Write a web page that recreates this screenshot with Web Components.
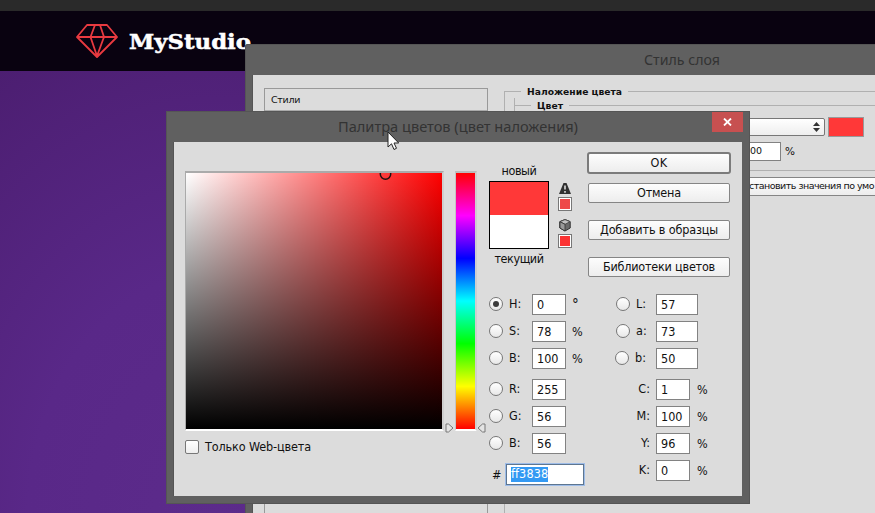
<!DOCTYPE html>
<html lang="ru">
<head>
<meta charset="utf-8">
<title>MyStudio</title>
<style>
html,body{margin:0;width:875px;height:513px;overflow:hidden}
</style>
</head>
<body>
<studio-desktop></studio-desktop>
<script>
const define = (name, css, html, init) => customElements.define(name, class extends HTMLElement {
  constructor() {
    super();
    this.attachShadow({mode: 'open'});
  }
  connectedCallback() {
    const src = typeof html === 'function' ? html(this) : html;
    this.shadowRoot.innerHTML = `<style>*{box-sizing:border-box}${css}</style>${src}`;
    if (init) init(this);
  }
});

/* Text line fitted to a given width: by letter spacing, or by stretching when "scale" is set. */
customElements.define('fit-text', class extends HTMLElement {
  connectedCallback() {
    if (!this.shadowRoot) this.attachShadow({mode: 'open'});
    this.shadowRoot.innerHTML = '<style>:host{display:inline-block;white-space:nowrap;flex:none}span{display:inline-block;white-space:pre;transform-origin:0 50%}</style><span></span>';
    const s = this.shadowRoot.querySelector('span');
    const t = this.getAttribute('t');
    s.textContent = t;
    const w = +this.getAttribute('w');
    if (w) {
      this.style.width = w + 'px';
      const n = s.getBoundingClientRect().width;
      if (this.hasAttribute('scale')) s.style.transform = `scaleX(${w / n})`;
      else s.style.letterSpacing = ((w - n) / t.length) + 'px';
    }
  }
});

define('window-frame', `
:host{display:flex;flex-direction:column;background:#606060;box-shadow:inset 0 0 0 1px #555;padding:0 8px 8px}
header{flex:none;height:var(--bar);display:flex;justify-content:center;align-items:center;position:relative;color:#333;font:15px "Noto Sans","Open Sans",sans-serif;padding-bottom:2px}
main{flex:1;background:#dcdcdc;min-height:0;display:flex;align-items:flex-start;box-shadow:-1px 0 #555}
`, '<header><slot name="title"></slot><slot name="close"></slot></header><main><slot></slot></main>');

define('close-button', `
:host{position:absolute;right:-1px;top:1px;width:31px;height:20px;background:#c75050;display:flex;align-items:center;justify-content:center}
`, '<svg width="9" height="8" viewBox="0 0 9 8"><path d="M1 .5 8 7.5M8 .5 1 7.5" stroke="#fff" stroke-width="1.8"/></svg>');

define('push-button', `
:host{display:flex;height:20px;align-items:center;justify-content:center;background:linear-gradient(#fdfdfd,#ededed);border:1px solid #858585;border-radius:2px;color:#111;padding-bottom:2px;box-sizing:border-box}
:host([primary]){height:22px;border:2px solid #7b7b7b;border-radius:3px}
`, '<slot></slot>');

define('value-box', `
:host{display:flex;height:21px;width:34px;align-items:center;padding:0 0 1px 4px;border:1px solid #828282;background:#fff;color:#111;box-sizing:border-box}
:host([wide]){width:42px}
`, '<slot></slot>');

define('radio-dot', `
:host{display:flex;width:14px;height:14px;border-radius:50%;border:1px solid #777;background:linear-gradient(#fff,#e8e8e8);align-items:center;justify-content:center;flex:none;box-sizing:border-box;margin-bottom:2px}
i{width:6px;height:6px;border-radius:50%;background:#3c3c3c}
`, el => el.hasAttribute('on') ? '<i></i>' : '');

define('channel-row', `
:host{display:grid;grid-template-columns:14px 29px auto 1fr;height:21px;align-items:center;width:112px}
:host([right]){grid-template-columns:14px 26px auto 1fr;width:110px}
label{padding:0 0 2px 6px;white-space:nowrap}
:host([ink]) label{grid-column:1/3;padding:0 6px 2px 0;text-align:right}
em{font-style:normal;padding-left:6px}
em.deg{font-size:15px;line-height:15px;padding-top:2px}
:host([right]) em{padding-left:7px}
`, el => {
  const a = n => el.getAttribute(n), h = n => el.hasAttribute(n);
  return `${h('ink') ? '' : `<radio-dot ${h('on') ? 'on' : ''}></radio-dot>`}<label>${a('k')}:</label><value-box ${h('wide') ? 'wide' : ''}>${a('v')}</value-box><em${a('u') === '°' ? ' class="deg"' : ''}>${a('u') || ''}</em>`;
});

define('color-field', `
:host{display:block;position:relative;width:259px;height:260px;border:solid;border-width:2px 2px 2px 1px;border-color:#aaa #cfcfcf #fff #aaa;box-sizing:border-box}
div{width:256px;height:256px;overflow:hidden;background:linear-gradient(transparent,#000),linear-gradient(90deg,#fff,#f00)}
svg{position:absolute;left:193px;top:0}
`, '<div></div><svg width="14" height="7" viewBox="0 0 14 7"><circle cx="6.5" cy="1" r="5.2" fill="none" stroke="#201010" stroke-width="1.5"/></svg>');

define('hue-slider', `
:host{display:block;position:relative;width:22px;height:260px;border:solid;border-width:2px 2px 2px 1px;border-color:#bbb #cfcfcf #fff #c4c4c4;box-sizing:border-box}
div{height:256px;background:linear-gradient(#f00,#f0f 16.67%,#00f 33.33%,#0ff 50%,#0f0 66.67%,#ff0 83.33%,#f00)}
svg{position:absolute;top:250px}
.l{left:-11px}.r{left:21px}
path{fill:#e4e4e4;stroke:#777}
`, '<div></div><svg class="l" width="9" height="10"><path d="M1 1H3.5L8 5 3.5 9H1Z"/></svg><svg class="r" width="9" height="10"><path d="M8 1H5.5L1 5 5.5 9H8Z"/></svg>');

define('color-compare', `
:host{display:flex;flex-direction:column;align-items:center;width:60px}
div{width:60px;height:68px;border:1px solid #000;background:linear-gradient(#ff3838 33px,#fff 33px)}
fit-text{height:20px;line-height:20px}
`, '<fit-text t="новый" w="35"></fit-text><div></div><fit-text t="текущий" w="49"></fit-text>');

define('gamut-hints', `
:host{display:flex;flex-direction:column;width:14px;align-items:center}
svg{flex:none}
b{display:block;width:14px;height:14px;flex:none;border:1px solid #777;box-shadow:inset 0 0 0 1px #fff;background:#ee4848}
b.s{background:#fb3333}
`, `<svg width="14" height="14" viewBox="0 0 14 14"><path d="M5.5 1H8.5L13 12H1Z" fill="#303030"/><path d="M7 3.5V7.6M7 9V10.8" stroke="#ddd" stroke-width="1.6"/></svg><b style="margin-top:1px"></b>
<svg style="margin-top:7px" width="14" height="15" viewBox="0 0 14 15"><path d="M7 1.5 12.2 3.6V10L7 13 1.8 10V3.6Z" fill="#6a6a6a" stroke="#303030"/><path d="M7 1.6 12 3.7 7 6.3 2 3.7Z" fill="#c0c0c0" stroke="#444" stroke-width=".8"/><path d="M7 6.3V13L2 10V3.8Z" fill="#999" stroke="#303030" stroke-width=".8"/></svg><b class="s" style="margin-top:1px"></b>`);

define('hex-input', `
:host{display:flex;align-items:center;height:23px}
span{width:15px;padding-left:2px;flex:none}
div{width:80px;height:23px;border:1px solid #9dbce8;flex:none}
p{margin:0;height:21px;background:#fff;border:1px solid #5e7690;display:flex;align-items:center;padding-left:4px}
fit-text{background:#3399f3;color:#fff;height:15px;line-height:14px}
`, '<span>#</span><div><p><fit-text t="ff3838" w="37"></fit-text></p></div>');

define('color-picker', `
:host{display:flex;align-items:flex-start;font:12.5px "DejaVu Sans Condensed","DejaVu Sans",sans-serif;font-stretch:condensed;color:#111}
.left{width:304px;padding:29px 0 0 11px}
.maps{display:flex;gap:11px}
.web{display:flex;align-items:center;gap:6px;height:16px;margin-top:8px}
.web i{width:14px;height:14px;border:1px solid #777;border-radius:2px;background:linear-gradient(#fff,#eee)}
.web fit-text{margin-bottom:1px}
.right{width:253px;padding:10px 0 0 11px}
.top{display:flex;height:142px}
.buttons{display:flex;flex-direction:column;width:145px;margin-left:15px}
.buttons push-button{margin:0 1px}
.buttons push-button[primary]{margin:0 0 9px}
.chan{display:flex;gap:15px}
.col{display:flex;flex-direction:column;gap:6px}
.gap{margin-top:4px}
.r .b{margin-left:-1px;grid-template-columns:14px 27px auto 1fr}
hex-input{margin:3px 0 0 1px}
`, `
<div class="left">
 <div class="maps"><color-field></color-field><hue-slider></hue-slider></div>
 <div class="web"><i></i><fit-text t="Только Web-цвета" w="106"></fit-text></div>
</div>
<div class="right">
 <div class="top">
  <color-compare style="margin-top:9px"></color-compare>
  <gamut-hints style="margin:30px 0 0 9px"></gamut-hints>
  <div class="buttons">
   <push-button primary><fit-text t="OK" w="17"></fit-text></push-button>
   <push-button><fit-text t="Отмена" w="44"></fit-text></push-button>
   <push-button style="margin-top:17px"><fit-text t="Добавить в образцы" w="118"></fit-text></push-button>
   <push-button style="margin-top:17px"><fit-text t="Библиотеки цветов" w="112"></fit-text></push-button>
  </div>
 </div>
 <div class="chan">
  <div class="col">
   <channel-row on k="H" v="0" u="°"></channel-row>
   <channel-row k="S" v="78" u="%"></channel-row>
   <channel-row k="B" v="100" u="%"></channel-row>
   <channel-row class="gap" k="R" v="255"></channel-row>
   <channel-row k="G" v="56"></channel-row>
   <channel-row k="B" v="56"></channel-row>
   <hex-input></hex-input>
  </div>
  <div class="col r">
   <channel-row right wide k="L" v="57"></channel-row>
   <channel-row right wide k="a" v="73"></channel-row>
   <channel-row right wide class="b" k="b" v="50"></channel-row>
   <channel-row right ink class="gap" k="C" v="1" u="%"></channel-row>
   <channel-row right ink k="M" v="100" u="%"></channel-row>
   <channel-row right ink k="Y" v="96" u="%"></channel-row>
   <channel-row right ink k="K" v="0" u="%"></channel-row>
  </div>
 </div>
</div>`);

define('group-box', `
:host{display:block;border-left:1px solid #b0b0b0;box-sizing:border-box}
header{display:flex;align-items:center;height:14px;margin-top:-7px;gap:6px;font-weight:bold}
header::before{content:"";width:16px;border-top:1px solid #b0b0b0}
header::after{content:"";flex:1;border-top:1px solid #b0b0b0}
`, '<header><slot name="legend"></slot></header><slot></slot>');

define('layer-style', `
:host{display:flex;align-items:flex-start;width:100%;height:100%;font:9.5px "DejaVu Sans",sans-serif;color:#111}
.list{margin:13px 0 0 11px;width:224px;height:440px;border:1px solid #999;flex:none}
.list div{height:22px;border-bottom:1px solid #aaa;display:flex;align-items:center;padding-left:6px}
.outer{margin:16px 0 0 16px;width:420px;height:440px;flex:none}
.inner{margin:7px 0 0 9px;height:73px;border-bottom:1px solid #b0b0b0}
.line{display:flex;align-items:center;justify-content:flex-end;height:20px}
.sel{width:180px;height:18px;border:1px solid #777;border-radius:2px;background:linear-gradient(#fff,#eee);display:flex;align-items:center;justify-content:flex-end;padding-right:4px}
.sw{width:36px;height:20px;border:1px solid #999;background:#ff3838;margin:0 60px 0 3px}
value-box{height:19px;width:60px;padding-left:28px}
.pc{margin:0 125px 0 4px;width:14px;font-size:10.5px}
push-button{height:19px;width:200px;margin:6px 0 0 224px;justify-content:flex-start;padding-left:19px}
`, `
<div class="list"><div><fit-text t="Стили" w="29"></fit-text></div></div>
<group-box class="outer"><fit-text slot="legend" scale t="Наложение цвета" w="95"></fit-text>
 <group-box inner class="inner"><fit-text slot="legend" scale t="Цвет" w="26"></fit-text>
  <div class="line" style="margin-top:5px"><div class="sel"><svg width="7" height="10"><path d="M3.5 0 7 4H0ZM3.5 10 0 6H7Z" fill="#333"/></svg></div><div class="sw"></div></div>
  <div class="line" style="margin-top:4px"><value-box>00</value-box><span class="pc">%</span></div>
 </group-box>
 <push-button><fit-text t="становить значения по умо" w="125"></fit-text></push-button>
</group-box>`);

define('site-page', `
:host{display:flex;flex-direction:column;width:875px;height:513px;background:radial-gradient(ellipse 480px 620px at 220px 520px,#5c2b8b,#592888 40%,#481b6a)}
.top{height:11px;background:#2a2a2a;flex:none}
nav{height:60px;background:#090210;flex:none;display:flex;align-items:center;padding-left:76px;color:#fff}
fit-text{font:bold 21px/30px "DejaVu Serif",serif;margin:2px 0 0 11px;-webkit-text-stroke:.5px #fff}
`, `<div class="top"></div><nav><svg width="42" height="34" viewBox="0 0 42 34" fill="none" stroke="#e93a40" stroke-width="1.8" stroke-linejoin="round"><path d="M11 1H31L41 13 21 33 1 13ZM1 13H41M19 1 14.5 13 21 32M24 1 28 13 21 32"/></svg><fit-text scale t="MyStudio" w="122"></fit-text></nav>`);

define('mouse-pointer', ':host{display:block;width:13px;height:20px}svg{display:block}',
'<svg width="13" height="20" viewBox="0 0 13 20"><path d="M1 1V16L4.5 12.8 7 18.5 9.5 17.3 7 12H11.7Z" fill="#fff" stroke="#222"/></svg>');

define('studio-desktop', `
:host{display:block;position:relative;width:875px;height:513px;overflow:hidden}
.style,.picker,mouse-pointer{position:absolute}
.style{left:245px;top:44px;width:873px;height:560px;--bar:31px;border-top-left-radius:3px}
.picker{left:166px;top:111px;width:584px;height:393px;--bar:31px}
mouse-pointer{left:387px;top:131px}
`, `
<site-page></site-page>
<window-frame class="style"><fit-text slot="title" scale t="Стиль слоя" w="76"></fit-text><layer-style></layer-style></window-frame>
<window-frame class="picker"><fit-text slot="title" scale t="Палитра цветов (цвет наложения)" w="240"></fit-text><close-button slot="close"></close-button><color-picker></color-picker></window-frame>
<mouse-pointer></mouse-pointer>`);
</script>
</body>
</html>
